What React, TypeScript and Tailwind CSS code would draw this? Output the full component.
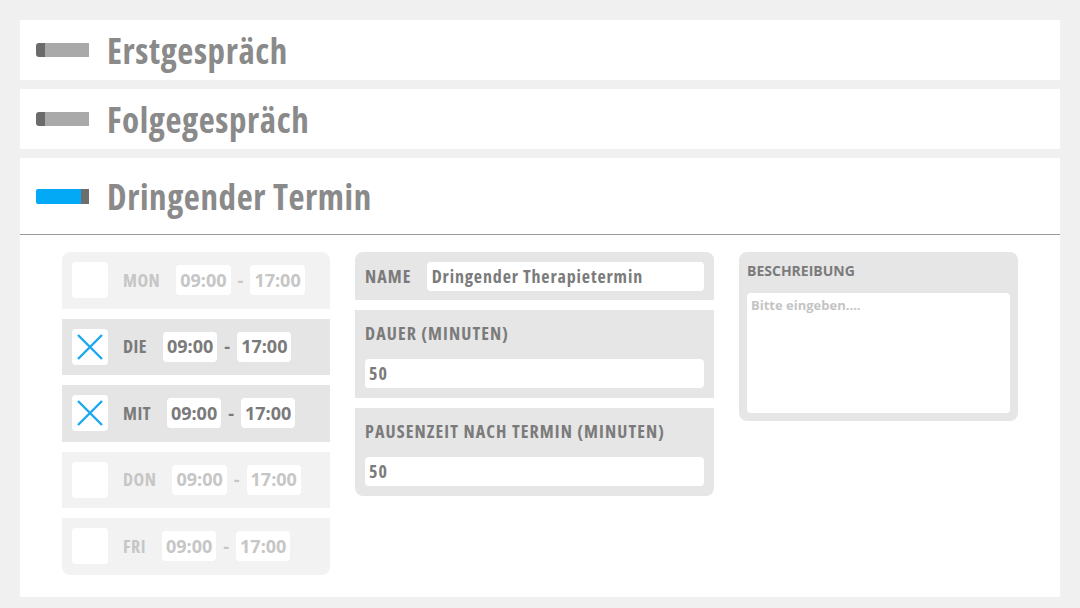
import { ReactNode } from 'react';

const FONT = "font-['Open_Sans','DejaVu_Sans_Condensed',sans-serif]";

interface Day {
  label: string;
  active: boolean;
}

const days: Day[] = [
  { label: 'MON', active: false },
  { label: 'DIE', active: true },
  { label: 'MIT', active: true },
  { label: 'DON', active: false },
  { label: 'FRI', active: false },
];

const Indicator = ({ active }: { active?: boolean }) =>
  active ? (
    <div className="flex h-[15px] w-[53px] shrink-0 overflow-hidden rounded-l-[2px]">
      <div className="flex-1 bg-[#03a9f4]" />
      <div className="w-[8px] bg-[#6e6e6e]" />
    </div>
  ) : (
    <div className="flex h-[14px] w-[53px] shrink-0 overflow-hidden rounded-l-[3px]">
      <div className="w-[9px] bg-[#6b6b6b]" />
      <div className="flex-1 bg-[#a9a9a9]" />
    </div>
  );

const Title = ({ children }: { children: ReactNode }) => (
  <span className="text-[35px] font-bold leading-none tracking-[0.6px] font-stretch-[75%] text-[#8a8a8a]">{children}</span>
);

const DayRow = ({ day }: { day: Day }) => {
  const text = day.active ? 'text-[#7a7a7a]' : 'text-[#c6c6c6]';
  return (
    <div className={`flex h-[56.5px] items-center pl-[10px] ${day.active ? 'bg-[#e5e5e5]' : 'bg-[#f2f2f2]'}`}>
      <div className="flex h-[36px] w-[36px] items-center justify-center rounded-[4px] bg-white">
        {day.active && (
          <svg width="36" height="36" viewBox="0 0 36 36">
            <line x1="6" y1="6" x2="30" y2="30" stroke="#1ea7f0" strokeWidth="2.4" />
            <line x1="30" y1="6" x2="6" y2="30" stroke="#1ea7f0" strokeWidth="2.4" />
          </svg>
        )}
      </div>
      <span className={`ml-[15px] text-[18px] font-bold tracking-[0.5px] font-stretch-[75%] ${text}`}>{day.label}</span>
      <span className={`ml-[16px] flex h-[30px] items-center rounded-[4px] bg-white px-[4px] text-[18px] font-bold font-stretch-[90%] ${text}`}>
        09:00
      </span>
      <span className={`mx-[7px] text-[18px] font-bold ${text}`}>-</span>
      <span className={`flex h-[30px] items-center rounded-[4px] bg-white px-[4px] text-[18px] font-bold font-stretch-[90%] ${text}`}>
        17:00
      </span>
    </div>
  );
};

const Field = ({ label, value, rounded }: { label: string; value: string; rounded: string }) => (
  <div className={`flex flex-col bg-[#e6e6e6] px-[10px] pb-[10px] pt-[12px] ${rounded}`}>
    <span className="text-[18px] font-bold leading-[22px] tracking-[1.1px] font-stretch-[75%] text-[#7b7b7b]">{label}</span>
    <div className="mt-[15px] flex h-[29px] items-center rounded-[4px] bg-white px-[4px] text-[18px] font-bold tracking-[1px] font-stretch-[75%] text-[#7b7b7b]">
      {value}
    </div>
  </div>
);

export default function App() {
  return (
    <div className={`${FONT} flex min-h-[608px] flex-col gap-[9px] bg-[#f0f0f0] px-5 pb-3 pt-5`}>
      <div className="flex h-[60px] items-center gap-[18px] bg-white pl-[16px]">
        <Indicator />
        <Title>Erstgespräch</Title>
      </div>
      <div className="flex h-[60px] items-center gap-[18px] bg-white pl-[16px]">
        <Indicator />
        <Title>Folgegespräch</Title>
      </div>
      <div className="flex flex-col bg-white">
        <div className="flex h-[77px] items-center gap-[18px] border-b border-[#9a9a9a] pl-[16px]">
          <Indicator active />
          <Title>Dringender Termin</Title>
        </div>
        <div className="flex items-start gap-[25px] pb-[22px] pl-[42px] pt-[17px]">
          <div className="flex w-[268px] flex-col gap-[10px] overflow-hidden rounded-[8px]">
            {days.map((d) => (
              <DayRow key={d.label} day={d} />
            ))}
          </div>

          <div className="flex w-[359px] flex-col gap-[10px]">
            <div className="flex h-[48px] items-center rounded-t-[8px] bg-[#e6e6e6] px-[10px]">
              <span className="text-[18px] font-bold tracking-[1.1px] font-stretch-[75%] text-[#7b7b7b]">NAME</span>
              <div className="ml-[15px] flex h-[29px] flex-1 items-center rounded-[4px] bg-white px-[5px] text-[18px] font-bold tracking-[0.85px] font-stretch-[75%] text-[#7b7b7b]">
                Dringender Therapietermin
              </div>
            </div>
            <Field label="DAUER (MINUTEN)" value="50" rounded="" />
            <Field label="PAUSENZEIT NACH TERMIN (MINUTEN)" value="50" rounded="rounded-b-[8px]" />
          </div>

          <div className="flex h-[169px] w-[279px] flex-col rounded-[8px] bg-[#e6e6e6] px-[8px] pb-[8px] pt-[10px]">
            <span className="text-[14px] font-bold leading-[18px] font-stretch-[90%] text-[#7b7b7b]">BESCHREIBUNG</span>
            <textarea
              className="mt-[13px] flex-1 resize-none rounded-[4px] bg-white px-[4px] py-[3px] text-[13px] font-bold font-stretch-[90%] text-[#7b7b7b] outline-none placeholder:text-[#c4c4c4]"
              placeholder="Bitte eingeben...."
            />
          </div>
        </div>
      </div>
    </div>
  );
}
